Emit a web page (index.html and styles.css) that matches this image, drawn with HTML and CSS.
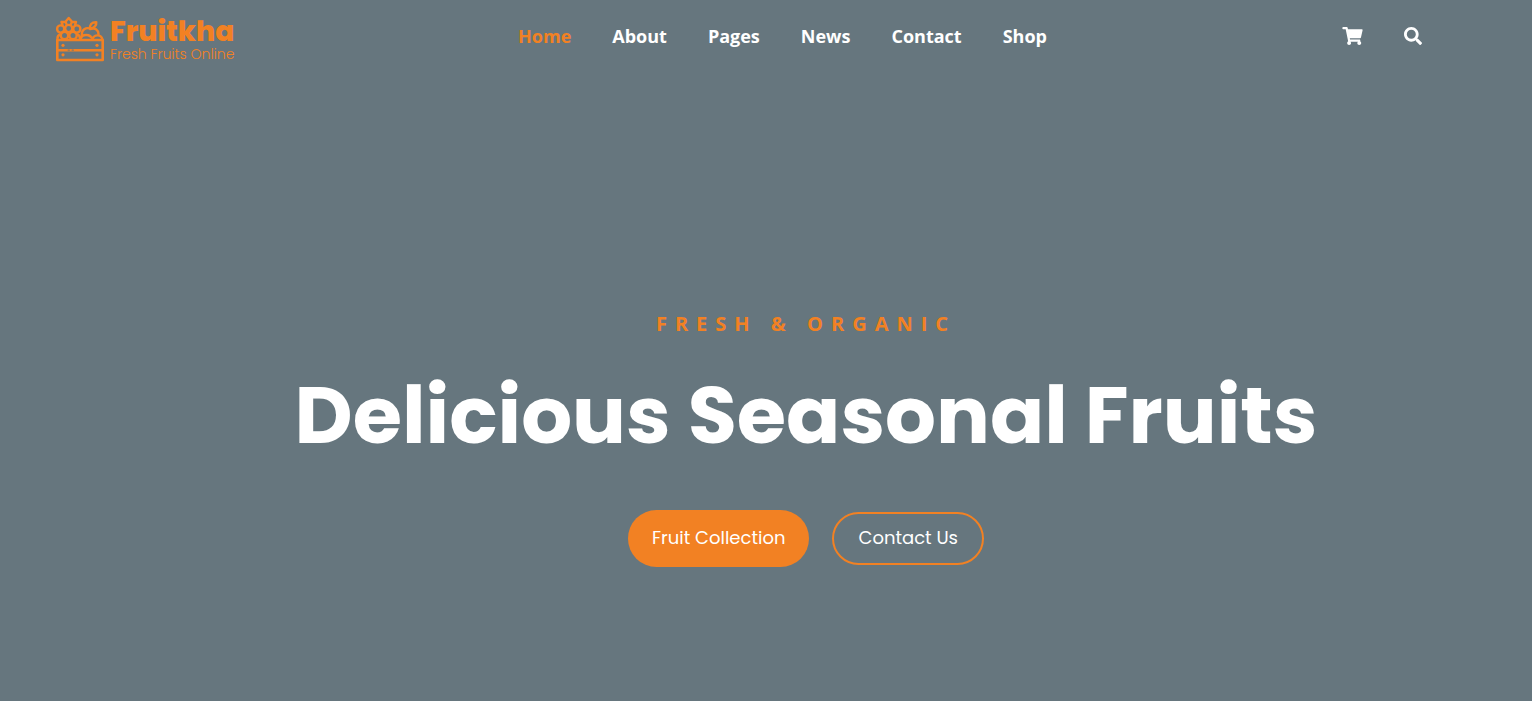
FILE: index.html
```html
<!DOCTYPE html>
<html lang="en">
<head>
<meta charset="utf-8">
<meta name="viewport" content="width=device-width, initial-scale=1">
<title>Fruitkha</title>
<link rel="stylesheet" href="styles.css">
</head>
<body>
<header class="site-header">
  <a class="logo" href="#" aria-label="Fruitkha home">
    <svg class="logo-mark" viewBox="0 0 48 46" fill="none" stroke="currentColor" stroke-width="2.400" stroke-linecap="round" stroke-linejoin="round" aria-hidden="true">
      <path d="M6.500 9 5.500 6 9.500 5.800 12.700 2 16 5.800 20 6 19 9M9.500 5.800 10.500 8M16 5.800 15 8"/>
      <circle cx="12.700" cy="12.500" r="3.600"/>
      <circle cx="4.700" cy="13" r="3.600"/>
      <circle cx="20.800" cy="13" r="3.600"/>
      <circle cx="8.500" cy="19.500" r="3.700"/>
      <circle cx="17" cy="19.500" r="3.700"/>
      <path d="M1.500 23.500c-.3-3 1-4.500 2.800-5M24 23.500c.3-3-1-4.500-2.800-5"/>
      <path d="M26 20c-1-6 4-9.500 9-7 4-1.500 7.500 1 7.500 5M34 13c-.5-4 1.500-7 6.300-6.800 .3 3.300-2 5.500-5.800 6.500"/>
      <path d="M24.500 23.500c1-6 10-6 12 0 1.500-5.500 8.500-5.500 10 0"/>
      <path d="M1.300 24h45.400v20H1.300zM2 34.300h44" stroke-width="2.600"/>
      <path d="M12.500 34.300h.5M16.500 34.300h.5" stroke="#9b7a58" stroke-width="2"/>
      <g fill="currentColor" stroke="none"><circle cx="7" cy="29.300" r="1.600"/><circle cx="41" cy="29.300" r="1.600"/><circle cx="7" cy="38.800" r="1.600"/><circle cx="41" cy="38.800" r="1.600"/></g>
    </svg>
    <span class="logo-text">
      <span class="logo-name">Fruitkha</span>
      <span class="logo-tagline">Fresh Fruits Online</span>
    </span>
  </a>
  <nav class="main-nav" aria-label="Main">
    <a class="nav-link active" href="#" aria-current="page">Home</a>
    <a class="nav-link" href="#">About</a>
    <a class="nav-link" href="#">Pages</a>
    <a class="nav-link" href="#">News</a>
    <a class="nav-link" href="#">Contact</a>
    <a class="nav-link" href="#">Shop</a>
  </nav>
  <div class="header-icons">
    <a class="icon-link" href="#" aria-label="Shopping cart">
      <svg class="icon-cart" viewBox="0 0 576 512" fill="currentColor" aria-hidden="true"><path d="M528.120 301.319l47.273-208C578.806 78.301 567.391 64 551.990 64H159.208l-9.166-44.810C147.758 8.021 137.930 0 126.529 0H24C10.745 0 0 10.745 0 24v16c0 13.255 10.745 24 24 24h69.883l70.248 343.435C147.325 417.100 136 435.222 136 456c0 30.928 25.072 56 56 56s56-25.072 56-56c0-15.674-6.447-29.835-16.824-40h209.647C430.447 426.165 424 440.326 424 456c0 30.928 25.072 56 56 56s56-25.072 56-56c0-22.172-12.888-41.332-31.579-50.405l5.517-24.276c3.413-15.018-8.002-29.319-23.403-29.319H218.117l-6.545-32h293.145c11.206 0 20.920-7.754 23.403-18.681z"/></svg>
    </a>
    <button class="icon-link" type="button" aria-label="Search">
      <svg class="icon-search" viewBox="0 0 512 512" fill="currentColor" aria-hidden="true"><path d="M505 442.700L405.300 343c-4.500-4.500-10.600-7-17-7H372c27.600-35.300 44-79.700 44-128C416 93.100 322.900 0 208 0S0 93.100 0 208s93.100 208 208 208c48.300 0 92.700-16.400 128-44v16.300c0 6.400 2.500 12.500 7 17l99.700 99.700c9.400 9.400 24.600 9.400 33.900 0l28.300-28.300c9.400-9.400 9.400-24.600.1-34zM208 336c-70.700 0-128-57.200-128-128 0-70.700 57.200-128 128-128 70.700 0 128 57.200 128 128 0 70.700-57.200 128-128 128z"/></svg>
    </button>
  </div>
</header>
<main class="hero">
  <p class="hero-subtitle">Fresh &amp; Organic</p>
  <h1 class="hero-title">Delicious Seasonal Fruits</h1>
  <div class="hero-actions">
    <a class="btn btn-filled" href="#">Fruit Collection</a>
    <a class="btn btn-outline" href="#">Contact Us</a>
  </div>
</main>
</body>
</html>
```
FILE: styles.css
```css
* {
  box-sizing: border-box;
}

body {
  margin: 0;
  min-height: 100vh;
  background: #66767e;
  color: #fff;
  font-family: "Open Sans", sans-serif;
}

a {
  color: inherit;
  text-decoration: none;
}

.site-header {
  display: grid;
  grid-template-columns: 1fr auto 1fr;
  align-items: start;
  padding: 16px 23px 0 56px;
}

.logo {
  display: flex;
  gap: 6px;
  justify-self: start;
  color: #f28123;
  font-family: Poppins, Inter, sans-serif;
}

.logo-mark {
  width: 48px;
  height: 46px;
}

.logo-text {
  display: flex;
  flex-direction: column;
}

.logo-name {
  font-size: 28px;
  font-weight: 800;
  line-height: 31px;
}

.logo-tagline {
  font-size: 14px;
  font-weight: 300;
  line-height: 15px;
}

.main-nav {
  display: flex;
  gap: 41px;
}

.nav-link {
  font-size: 18px;
  font-weight: 700;
  line-height: 40px;
}

.nav-link.active {
  color: #f28123;
}

.header-icons {
  display: flex;
  align-items: center;
  justify-self: end;
  gap: 41px;
  height: 40px;
  margin-right: 87px;
}

.icon-link {
  display: flex;
  padding: 0;
  border: 0;
  background: none;
  color: inherit;
  cursor: pointer;
}

.icon-cart {
  width: 21px;
  height: 18px;
}

.icon-search {
  width: 18px;
  height: 18px;
}

.hero {
  display: flex;
  flex-direction: column;
  align-items: center;
  padding: 248px 0 64px 80px;
  text-align: center;
}

.hero-subtitle {
  margin: 0;
  color: #f28123;
  font-size: 20px;
  font-weight: 700;
  letter-spacing: 8px;
  line-height: 28px;
  text-transform: uppercase;
}

.hero-title {
  margin: 25px 0 43px;
  font-family: Poppins, Inter, sans-serif;
  font-size: 80px;
  font-weight: 700;
  line-height: 104px;
}

.hero-actions {
  display: flex;
  align-items: center;
  gap: 23px;
}

.btn {
  border-radius: 30px;
  font-family: Poppins, Inter, sans-serif;
  font-size: 18px;
  line-height: 29px;
}

.btn-filled {
  padding: 13px 24px 15px;
  background: #f28123;
}

.btn-outline {
  padding: 9px 24px 11px;
  border: 2px solid #f28123;
}
```
